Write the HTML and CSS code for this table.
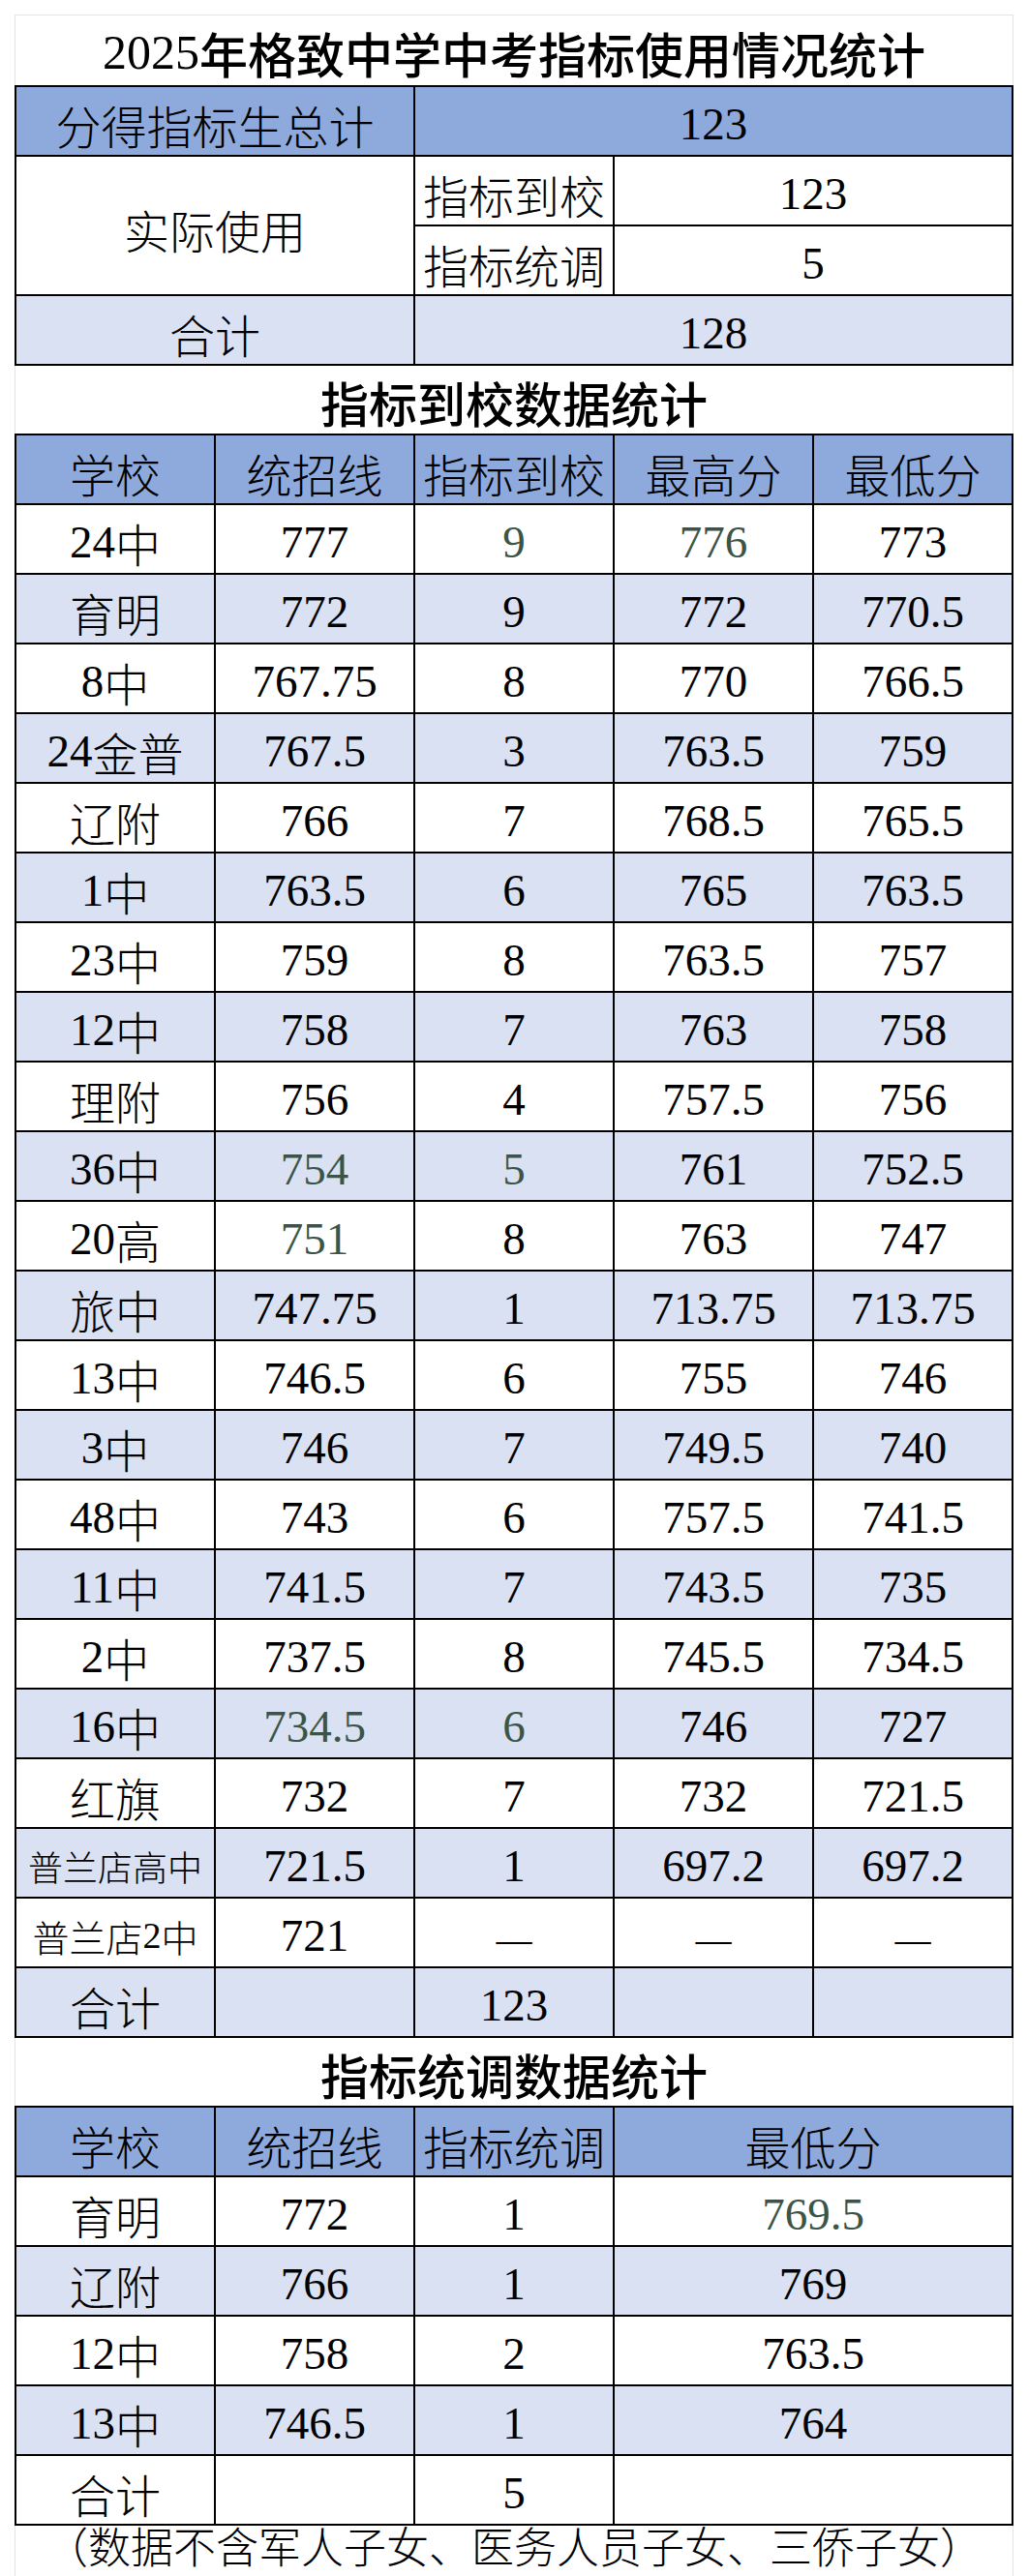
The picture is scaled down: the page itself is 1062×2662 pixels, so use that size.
FILE: index.html
```html
<!DOCTYPE html>
<html lang="zh-CN">
<head>
<meta charset="utf-8">
<title>2025年格致中学中考指标使用情况统计</title>
<link rel="stylesheet" href="styles.css">
</head>
<body>
<div class="sheet">
  <div class="caption top"><span class="n">2025</span>年格致中学中考指标使用情况统计</div>

  <div class="tbl summary">
    <div class="c b span2">分得指标生总计</div>
    <div class="c b span3">123</div>
    <div class="c w span2 tall">实际使用</div>
    <div class="c w">指标到校</div>
    <div class="c w span2">123</div>
    <div class="c w">指标统调</div>
    <div class="c w span2">5</div>
    <div class="c l span2">合计</div>
    <div class="c l span3">128</div>
  </div>

  <div class="caption">指标到校数据统计</div>

  <div class="tbl">
    <div class="row b"><div>学校</div><div>统招线</div><div>指标到校</div><div>最高分</div><div>最低分</div></div>
    <div class="row w"><div><span class="n">24</span>中</div><div>777</div><div class="g">9</div><div class="g">776</div><div>773</div></div>
    <div class="row l"><div>育明</div><div>772</div><div>9</div><div>772</div><div>770.5</div></div>
    <div class="row w"><div><span class="n">8</span>中</div><div>767.75</div><div>8</div><div>770</div><div>766.5</div></div>
    <div class="row l"><div><span class="n">24</span>金普</div><div>767.5</div><div>3</div><div>763.5</div><div>759</div></div>
    <div class="row w"><div>辽附</div><div>766</div><div>7</div><div>768.5</div><div>765.5</div></div>
    <div class="row l"><div><span class="n">1</span>中</div><div>763.5</div><div>6</div><div>765</div><div>763.5</div></div>
    <div class="row w"><div><span class="n">23</span>中</div><div>759</div><div>8</div><div>763.5</div><div>757</div></div>
    <div class="row l"><div><span class="n">12</span>中</div><div>758</div><div>7</div><div>763</div><div>758</div></div>
    <div class="row w"><div>理附</div><div>756</div><div>4</div><div>757.5</div><div>756</div></div>
    <div class="row l"><div><span class="n">36</span>中</div><div class="g">754</div><div class="g">5</div><div>761</div><div>752.5</div></div>
    <div class="row w"><div><span class="n">20</span>高</div><div class="g">751</div><div>8</div><div>763</div><div>747</div></div>
    <div class="row l"><div>旅中</div><div>747.75</div><div>1</div><div>713.75</div><div>713.75</div></div>
    <div class="row w"><div><span class="n">13</span>中</div><div>746.5</div><div>6</div><div>755</div><div>746</div></div>
    <div class="row l"><div><span class="n">3</span>中</div><div>746</div><div>7</div><div>749.5</div><div>740</div></div>
    <div class="row w"><div><span class="n">48</span>中</div><div>743</div><div>6</div><div>757.5</div><div>741.5</div></div>
    <div class="row l"><div><span class="n">11</span>中</div><div>741.5</div><div>7</div><div>743.5</div><div>735</div></div>
    <div class="row w"><div><span class="n">2</span>中</div><div>737.5</div><div>8</div><div>745.5</div><div>734.5</div></div>
    <div class="row l"><div><span class="n">16</span>中</div><div class="g">734.5</div><div class="g">6</div><div>746</div><div>727</div></div>
    <div class="row w"><div>红旗</div><div>732</div><div>7</div><div>732</div><div>721.5</div></div>
    <div class="row l"><div class="sm1">普兰店高中</div><div>721.5</div><div>1</div><div>697.2</div><div>697.2</div></div>
    <div class="row w"><div class="sm2">普兰店<span class="n">2</span>中</div><div>721</div><div class="dash">—</div><div class="dash">—</div><div class="dash">—</div></div>
    <div class="row l"><div>合计</div><div></div><div>123</div><div></div><div></div></div>
  </div>

  <div class="caption">指标统调数据统计</div>

  <div class="tbl">
    <div class="row b"><div>学校</div><div>统招线</div><div>指标统调</div><div class="span2">最低分</div></div>
    <div class="row w"><div>育明</div><div>772</div><div>1</div><div class="span2 g">769.5</div></div>
    <div class="row l"><div>辽附</div><div>766</div><div>1</div><div class="span2">769</div></div>
    <div class="row w"><div><span class="n">12</span>中</div><div>758</div><div>2</div><div class="span2">763.5</div></div>
    <div class="row l"><div><span class="n">13</span>中</div><div>746.5</div><div>1</div><div class="span2">764</div></div>
    <div class="row w"><div>合计</div><div></div><div>5</div><div class="span2"></div></div>
  </div>

  <div class="note">（数据不含军人子女、医务人员子女、三侨子女）</div>
</div>
</body>
</html>
```

FILE: styles.css
```css
html, body {
  margin: 0;
  padding: 0;
  background: #ffffff;
}

body {
  font-family: "Liberation Serif", "Noto Sans CJK SC", serif;
  color: #000000;
  font-weight: 300;
}

.sheet {
  width: 1032px;
  margin: 15px 0 0 15px;
}

.caption {
  height: 70px;
  display: flex;
  align-items: center;
  justify-content: center;
  font-size: 50px;
  font-weight: 500;
  padding-top: 4px;
  box-sizing: border-box;
  border-left: 1px solid #e4e4e4;
  border-right: 1px solid #e4e4e4;
  background: #ffffff;
}

.caption.top {
  height: 73px;
  border-top: 1px solid #e4e4e4;
}

.n {
  vertical-align: -0.12em;
}

.tbl {
  display: grid;
  grid-template-columns: repeat(5, 1fr);
  grid-auto-rows: 70px;
  gap: 2px;
  padding: 2px;
  background: #000000;
}

.row {
  display: contents;
}

.c,
.row > div {
  display: flex;
  align-items: center;
  justify-content: center;
  font-size: 47px;
  padding-top: 6px;
  box-sizing: border-box;
  white-space: nowrap;
}

.b, .row.b > div { background: #8eaadc; }
.w, .row.w > div { background: #ffffff; }
.l, .row.l > div { background: #d9e1f2; }

.span2 { grid-column: span 2; }
.span3 { grid-column: span 3; }
.tall { grid-row: span 2; }

.row > div.g { color: #3a5547; }

.row > div.sm1 { font-size: 36px; }
.row > div.sm2 { font-size: 38px; }

.row > div.dash {
  font-family: "Noto Sans CJK SC", sans-serif;
  font-weight: 300;
}

.note {
  height: 60px;
  display: flex;
  align-items: flex-start;
  justify-content: center;
  font-size: 44px;
  line-height: 1;
  padding-top: 3px;
  box-sizing: border-box;
  border-left: 1px solid #e4e4e4;
  border-right: 1px solid #e4e4e4;
}
```
